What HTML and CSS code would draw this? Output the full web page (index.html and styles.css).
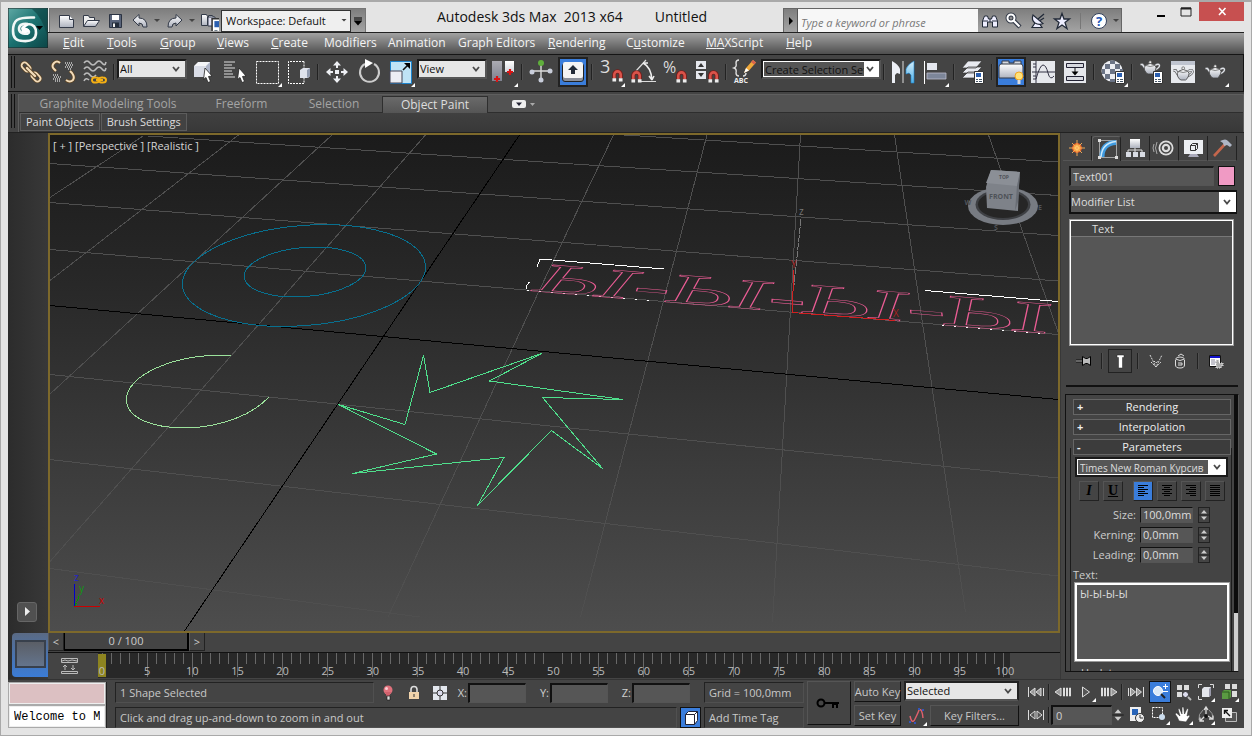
FILE: index.html
```html
<!DOCTYPE html>
<html lang="en">
<head>
<meta charset="utf-8">
<title>Autodesk 3ds Max 2013 x64 - Untitled</title>
<link rel="stylesheet" href="styles.css">
</head>
<body>
<svg class="defs" aria-hidden="true">
  <defs>
    <linearGradient id="metal" x1="0" y1="0" x2="0" y2="1"><stop offset="0" stop-color="#fff"/><stop offset="1" stop-color="#aeb3bf"/></linearGradient>
    <linearGradient id="sky" x1="0" y1="0" x2="0" y2="1"><stop offset="0" stop-color="#d6eefa"/><stop offset="1" stop-color="#4fb0e6"/></linearGradient>
    <linearGradient id="teal" x1="0" y1="0" x2="1" y2="1"><stop offset="0" stop-color="#5fa9a5"/><stop offset=".5" stop-color="#1a706f"/><stop offset="1" stop-color="#0c4546"/></linearGradient>
    <radialGradient id="spark"><stop offset="0" stop-color="#fff"/><stop offset=".4" stop-color="#ffd35a"/><stop offset="1" stop-color="#d9461c"/></radialGradient>
    <symbol id="fly" viewBox="0 0 4 4"><path d="M4 0v4H0z" fill="#fff"/></symbol>
    <symbol id="magnet" viewBox="0 0 12 14"><path d="M2.500 10V6a3.500 3.500 0 0 1 7 0v4" fill="none" stroke="#7a1a16" stroke-width="4.500"/><path d="M2.500 10V6a3.500 3.500 0 0 1 7 0v4" fill="none" stroke="#d9534a" stroke-width="2.800"/><path d="M.5 10h4v3.500h-4zM7.500 10h4v3.500h-4z" fill="#eee"/></symbol>
    <symbol id="teapot" viewBox="0 0 22 15"><path d="M1.500 4.500h2L6.500 9" fill="none" stroke="#555" stroke-width="3"/><path d="M1.500 4.500h2L6.500 9" fill="none" stroke="#dfe2e8" stroke-width="1.600"/><path d="M16 5.500q4-2.500 4.500 0 0 2.500-5 4.500" fill="none" stroke="#555" stroke-width="2.600"/><path d="M16 5.500q4-2.500 4.500 0 0 2.500-5 4.500" fill="none" stroke="#dfe2e8" stroke-width="1.300"/><path d="M7 5q4-3 8.500 0 2.500 2 1 5-1.500 3.500-3 4H9q-2-.5-3.500-4-1-3 1.500-5z" fill="url(#metal)" stroke="#444" stroke-width=".8"/><path d="M7 5.500q4 2 8.500 0" fill="none" stroke="#666" stroke-width=".8"/><circle cx="11.200" cy="2.200" r="1.400" fill="#eee" stroke="#444" stroke-width=".6"/></symbol>
    <symbol id="card" viewBox="0 0 10 13"><path d="M.5.5h9v12h-9z" fill="#fff" stroke="#333"/><path d="M2 2h5v4H2z" fill="#2b5fb0"/><path d="M2 8h2v1H2zM5 8h3v1H5zM2 10h2v1H2zM5 10h3v1H5z" fill="#456"/></symbol>
    <symbol id="chev" viewBox="0 0 8 6"><path d="M1 1l3 3.500L7 1" fill="none" stroke="#4a4a4a" stroke-width="1.800"/></symbol>
    <symbol id="updown" viewBox="0 0 10 14"><path d="M2 5.500L5 2l3 3.500zM2 8.500L5 12l3-3.500z" fill="#ccc"/><path d="M0 7h10" stroke="#222"/></symbol>
    <symbol id="chain" viewBox="0 0 24 24"><g fill="none" stroke-linecap="round" stroke="#5b4426" stroke-width="3.200"><rect x="2" y="4" width="10" height="6" rx="3" transform="rotate(45 7 7)"/><rect x="12" y="14" width="10" height="6" rx="3" transform="rotate(45 17 17)"/></g><g fill="none" stroke-linecap="round" stroke="#f3dcba" stroke-width="1.800"><rect x="2" y="4" width="10" height="6" rx="3" transform="rotate(45 7 7)"/><rect x="12" y="14" width="10" height="6" rx="3" transform="rotate(45 17 17)"/></g><path d="M8 8l8 8" stroke="#5b4426" stroke-width="4" stroke-linecap="round"/><path d="M8 8l8 8" stroke="#f3dcba" stroke-width="2.400" stroke-linecap="round"/></symbol>
  </defs>
</svg>

<div class="app">
  <header class="titlebar">
    <button class="logo" aria-label="Application menu">
      <svg viewBox="0 0 40 40"><path d="M0 0h40v40H0z" fill="url(#teal)" stroke="#222"/><path d="M24 1h15v26q-5-18-15-26z" fill="#0d3f40" opacity=".6"/><path d="M26 9.500Q14 9 9 12q-4 3-4 11 0 10 10 10 13 1 13-8 0-9-8-9-9-1-9 5 0 3 4 4.500 6 1 6-1.500t-5-3" fill="none" stroke="#f2f7f6" stroke-width="2.600" stroke-linecap="round"/><path d="M13 20q3-5 8-3l-4 2.500q5 1 4 4-3 3-7 1" fill="#fff"/><path d="M28 18h7l-3.500 4z" fill="#000"/></svg>
    </button>
    <div class="qat">
      <button aria-label="New"><svg viewBox="0 0 20 20"><path d="M2.500 4.500h10l4 4v8h-14z" fill="url(#metal)" stroke="#333a48"/><path d="M12.500 4.500v4h4" fill="#fff" stroke="#333a48"/></svg></button>
      <button aria-label="Open"><svg viewBox="0 0 20 20"><path d="M2.500 15V4.500h5l1 2h5V9" fill="#eee" stroke="#333a48"/><path d="M2.500 15.500l4-6h12l-4 6z" fill="url(#metal)" stroke="#333a48"/></svg></button>
      <button aria-label="Save"><svg viewBox="0 0 20 20"><path d="M4.500 3.500h12v13h-12z" fill="#59647a" stroke="#2b3342"/><path d="M7 4h7v5H7z" fill="#fff"/><path d="M7 11.500h7V16H7z" fill="#222c3a"/><path d="M8 12.500h2V16H8z" fill="#eee"/></svg></button>
      <button class="wide" aria-label="Undo"><svg viewBox="0 0 20 20"><path d="M3 9l6-5.500V7q8 0 8 9h-4q0-4-4-4v3z" fill="url(#metal)" stroke="#333a48"/></svg></button>
      <span class="tri" aria-hidden="true"></span>
      <button class="wide" aria-label="Redo"><svg viewBox="0 0 20 20"><path d="M17 9l-6-5.500V7q-8 0-8 9h4q0-4 4-4v3z" fill="url(#metal)" stroke="#333a48"/></svg></button>
      <span class="tri" aria-hidden="true"></span>
      <button aria-label="Project folder"><svg viewBox="0 0 20 20"><path d="M2.500 3.500h5l1 2v9h-6zM9.500 6.500v-2h4l1 2" fill="url(#metal)" stroke="#333a48"/><path d="M9 6h7v9H9z" fill="#dde" stroke="#333a48"/><svg x="10" y="7" width="8" height="11"><use href="#card"/></svg></svg></button>
      <div class="pick workspace"><select aria-label="Workspace"><option>Workspace: Default</option></select><i class="tri" aria-hidden="true"></i></div>
      <button class="qat-more" aria-label="Customize toolbar"><svg viewBox="0 0 12 20"><path d="M2 7h8M2 9h8" stroke="#000"/><path d="M2 10h8l-4 4.500z"/></svg></button>
    </div>
    <h1>Autodesk 3ds Max&nbsp; 2013 x64<span>Untitled</span></h1>
    <div class="info">
      <button class="info-open" aria-label="Expand search"><svg viewBox="0 0 12 20"><path d="M4 6v8l4-4z"/></svg></button>
      <input type="search" aria-label="Search" placeholder="Type a keyword or phrase">
      <button aria-label="Find"><svg viewBox="0 0 20 20"><path d="M2.500 16v-6l2-5h3l1 3h3l1-3h3l2 5v6h-5v-5h-5v5z" fill="#eef" stroke="#222a38"/><path d="M3 10h5M12 10h5M10 8v3" stroke="#222a38"/></svg></button>
      <button aria-label="Subscription"><svg viewBox="0 0 20 20"><circle cx="7" cy="7" r="3.500" fill="none" stroke="#333a48" stroke-width="4"/><path d="M9 9l7 7" stroke="#333a48" stroke-width="4.500"/><circle cx="7" cy="7" r="3.500" fill="none" stroke="#fff" stroke-width="2"/><path d="M9 9l6.500 6.500" stroke="#fff" stroke-width="2"/></svg></button>
      <button aria-label="Communication"><svg viewBox="0 0 20 20"><path d="M7 12l-3 4.500h10L11 12" fill="#eef" stroke="#222a38" stroke-width="1.200"/><path d="M5 4q-2 5 2 8 4 2.500 8 .5z" fill="#eef" stroke="#222a38" stroke-width="1.200"/><path d="M10 8l6-5M12 9.500l4-2.500" stroke="#222a38" stroke-width="1.300"/></svg></button>
      <button aria-label="Favorites"><svg viewBox="0 0 20 20"><path d="M10 2.500l2 5.500h5.500L13 11.500l2 6-5-3.500-5 3.500 2-6L2.500 8H8z" fill="#eef" stroke="#222a38" stroke-width="1.300"/></svg></button>
      <span class="info-sep"></span>
      <button aria-label="Help"><svg viewBox="0 0 20 20"><circle cx="10" cy="10" r="7.500" fill="#fff" stroke="#33415c"/><text x="10" y="14.500" class="q">?</text></svg></button>
      <span class="tri" aria-hidden="true"></span>
    </div>
    <div class="winctl">
      <button aria-label="Minimize"><svg viewBox="0 0 20 20"><path d="M6 13h8v2H6z"/></svg></button>
      <button aria-label="Maximize"><svg viewBox="0 0 20 20"><path d="M5 6h10v8H5z" fill="none" stroke="#222"/><path d="M5 6.500h10" stroke="#222" stroke-width="2"/></svg></button>
      <button class="close" aria-label="Close"><svg viewBox="0 0 20 20"><path d="M7 6l6.500 7M13.500 6L7 13" stroke="#fff" stroke-width="1.600"/></svg></button>
    </div>
  </header>

  <div class="frame">
  <nav class="menubar">
    <button><u>E</u>dit</button><button><u>T</u>ools</button><button><u>G</u>roup</button><button><u>V</u>iews</button><button><u>C</u>reate</button><button>Modifiers</button><button>Animation</button><button>Graph Editors</button><button><u>R</u>endering</button><button>C<u>u</u>stomize</button><button><u>M</u><u>A</u>XScript</button><button><u>H</u>elp</button>
  </nav>

  <div class="toolbar">
    <span class="grip"></span>
    <button aria-label="Link"><svg viewBox="0 0 32 32"><use href="#chain" x="4" y="4" width="24" height="24"/></svg></button>
    <button aria-label="Unlink"><svg viewBox="0 0 32 32"><g fill="none" stroke="#5b4426" stroke-width="3.600"><path d="M13 7q-3-3-6 0-3 3 0 6l2 2M19 24q4 3 7 0 2-3-1-7l-2-2"/></g><g fill="none" stroke="#f3dcba" stroke-width="2"><path d="M13 7q-3-3-6 0-3 3 0 6l2 2M19 24q4 3 7 0 2-3-1-7l-2-2"/></g><g stroke="#aaa" stroke-width="2" stroke-dasharray="1 1"><path d="M18 7h7M19 9h7M18 11h8M21 13h4M6 19h6M7 21h7M6 23h8M8 25h6"/></g></svg></button>
    <button aria-label="Bind to space warp"><svg viewBox="0 0 32 32"><path d="M5 7q3-4 6 0t6 0 6 0 4-1M5 13q3-4 6 0t6 0 6 0 4-1M5 19q3-4 6 0t6 0M5 25q2-4 5-1" fill="none" stroke="#bbb" stroke-width="1.600"/><path d="M13 24q0-3 4-2.500 3 0 3 2.500t-3 2.500q-4 .5-4-2.500zM20 24q0-3 4-2.500 3 0 3 2.500t-3 2.500q-4 .5-4-2.500zM17 24h7" fill="none" stroke="#f5b014" stroke-width="2"/></svg></button>
    <span class="sep"></span>
    <div class="pick combo-s"><select aria-label="Selection filter"><option>All</option></select><svg class="chev"><use href="#chev"/></svg></div>
    <button aria-label="Select object"><svg viewBox="0 0 32 32"><path d="M7 10l4-4h12v10l-4 5H7z" fill="#f4f5f8"/><path d="M7 10h12v11H7z" fill="#d9dce6"/><path d="M19 10l4-4v11l-4 4z" fill="#aeb5c8"/><path d="M18 12l7 8-3.500.5 2 5-2.500 1-2-5-2.500 2z" fill="#fff" stroke="#222" stroke-width=".8"/></svg></button>
    <button aria-label="Select by name"><svg viewBox="0 0 32 32"><path d="M5 6h11M5 9h8M5 12h11M5 15h8M5 18h9M5 21h11" stroke="#ddd" stroke-width="1.200"/><path d="M20 12l7 8-3.500.5 2 5-2.500 1-2-5-2.500 2z" fill="#fff" stroke="#222" stroke-width=".8"/></svg></button>
    <button aria-label="Rectangular region"><svg viewBox="0 0 32 32"><path d="M5.500 5.500h22v22h-22z" fill="none" stroke="#fff" stroke-dasharray="2 1"/><use href="#fly" x="27" y="27" width="4" height="4"/></svg></button>
    <button aria-label="Window crossing"><svg viewBox="0 0 32 32"><path d="M21 5.500H5.500v22H21v-7M21 5.500v7" fill="none" stroke="#fff" stroke-dasharray="2 1"/><path d="M17 14l3-2h7v8l-2 2h-8z" fill="#dfe3ec"/><path d="M24 14l3-2v8l-3 2z" fill="#929cb0"/></svg></button>
    <span class="sep"></span>
    <button aria-label="Move"><svg viewBox="0 0 32 32"><path d="M16 5l4 4.500h-3V12h-2V9.500h-3zM16 27l4-4.500h-3V20h-2v2.500h-3zM5 16l4.500-4v3H12v2H9.500v3zM27 16l-4.500-4v3H20v2h2.500v3zM14 14h4v4h-4z" fill="#eef0f4"/></svg></button>
    <button aria-label="Rotate"><svg viewBox="0 0 32 32"><path d="M21 8a9.500 9.500 0 1 1-9 0" fill="none" stroke="#ccc" stroke-width="2"/><path d="M12 3l8 4-8 5z" fill="#fff"/></svg></button>
    <button aria-label="Scale"><svg viewBox="0 0 32 32"><path d="M5.500 5.500h21v22h-21z" fill="#bfe3f6" stroke="#1c83cd"/><path d="M5 15h12v12H5z" fill="#eceef4" stroke="#445"/><path d="M18 14l5-5" stroke="#111" stroke-width="1.600"/><path d="M19 7h6v6z"/><use href="#fly" x="26" y="27" width="4" height="4"/></svg></button>
    <div class="pick combo-s"><select aria-label="Reference coordinate system"><option>View</option></select><svg class="chev"><use href="#chev"/></svg></div>
    <button aria-label="Pivot center"><svg viewBox="0 0 32 32"><path d="M5 5h10v20H5zM18 5h9v11h-9z" fill="url(#metal)"/><path d="M5 5h10v20H5z" fill="#445" opacity=".45"/><path d="M7 23h6M10 20v6M20 16h6M23 13v6" stroke="#d81414" stroke-width="2.200"/><use href="#fly" x="27" y="27" width="4" height="4"/></svg></button>
    <span class="sep"></span>
    <button aria-label="Manipulate"><svg viewBox="0 0 32 32"><path d="M16 8v16M8 15h16" stroke="#ddd" stroke-width="1.400"/><circle cx="16" cy="7" r="3" fill="#5fae3c"/><g fill="#c9cedb"><circle cx="7" cy="16" r="2.500"/><circle cx="25" cy="15" r="2.500"/><circle cx="16" cy="24" r="2.500"/></g></svg></button>
    <button class="on" aria-label="Keyboard shortcut override"><svg viewBox="0 0 32 32"><rect x="5.500" y="7.500" width="21" height="18" rx="2.500" fill="#8a8f9a" stroke="#222"/><rect x="6" y="6" width="20" height="16" rx="2" fill="#f4f4f4"/><path d="M16 9l5 5h-3v4h-4v-4h-3z" fill="#222b38"/></svg></button>
    <span class="sep"></span>
    <button aria-label="Snaps toggle"><svg viewBox="0 0 32 32"><text x="5" y="17" class="ic-num">3</text><use href="#magnet" x="17" y="13" width="11" height="13"/><use href="#fly" x="26" y="27" width="4" height="4"/></svg></button>
    <button aria-label="Angle snap"><svg viewBox="0 0 32 32"><path d="M9 15L19 4M14 25.500h15" stroke="#ddd" stroke-width="1.200"/><path d="M16 7q8 4 9 17M16 7l5 0M25 24l-3-4M25 24l2-4" fill="none" stroke="#eee" stroke-width="1.500"/><use href="#magnet" x="4" y="14" width="11" height="13"/></svg></button>
    <button aria-label="Percent snap"><svg viewBox="0 0 32 32"><text x="4" y="17" class="ic-num pct">%</text><use href="#magnet" x="17" y="14" width="11" height="13"/></svg></button>
    <button aria-label="Spinner snap"><svg viewBox="0 0 32 32"><path d="M5 5h10v8H5zM5 15h10v8H5z" fill="#e6e8ee"/><path d="M7 11l3-4 3 4zM7 17l3 4 3-4z" fill="#333"/><use href="#magnet" x="17" y="14" width="11" height="13"/></svg></button>
    <span class="sep"></span>
    <button aria-label="Named selection sets"><svg viewBox="0 0 32 32"><path d="M10 4q-3 0-3 3 1 4-2 5 3 1 2 5 0 3 3 3M14 20q3 0 3-3" fill="none" stroke="#ddd" stroke-width="1.400"/><path d="M15 17l2-5 7-8 3 2.500-7 8z" fill="#f0a93a"/><path d="M24 4l3 2.500-2 2L22 6z" fill="#d8624e"/><path d="M15 17l2-5 3 2.500z" fill="#fff"/><text x="5" y="27" class="abc">ABC</text></svg></button>
    <div class="pick combo-l"><select aria-label="Create selection set"><option>Create Selection Set</option></select><svg class="chev"><use href="#chev"/></svg></div>
    <span class="sep"></span>
    <button aria-label="Mirror"><svg viewBox="0 0 32 32"><path d="M5 5q6 3 8 8v5l-3-1-2 2v8H5z" fill="#eceff5"/><path d="M27 5q-6 3-8 8v5l3-1 2 2v8h3z" fill="url(#sky)" stroke="#1c83cd" stroke-width=".6"/><path d="M16 5v22" stroke="#ddd"/></svg></button>
    <button aria-label="Align"><svg viewBox="0 0 32 32"><path d="M5.500 5v23" stroke="#fff"/><path d="M8 7h10v7H8z" fill="#e4e7ee"/><path d="M8 17h19v6H8z" fill="#7d8699" stroke="#bbc" stroke-width=".8"/><use href="#fly" x="26" y="27" width="4" height="4"/></svg></button>
    <span class="sep"></span>
    <button aria-label="Layer manager"><svg viewBox="0 0 32 32"><g fill="#e8eaf0" stroke="#333" stroke-width=".7"><path d="M5 22l6-6h14l-6 6zM5 17l6-6h14l-6 6zM5 12l6-7h14l-6 7z"/></g><use href="#card" x="17" y="15" width="10" height="13"/></svg></button>
    <span class="sep"></span>
    <button class="on" aria-label="Graphite modeling tools"><svg viewBox="0 0 32 32"><path d="M7 9V5h7v2h5V5h7v4" fill="#d6d9e0" stroke="#333a48"/><path d="M6 8h20q2 0 2 3v11H4V11q0-3 2-3z" fill="url(#metal)" stroke="#333a48"/><circle cx="24" cy="20" r="4" fill="#ffe27a" stroke="#f2a520"/><path d="M22.500 24h3v4h-3z" fill="#ddd"/></svg></button>
    <button aria-label="Curve editor"><svg viewBox="0 0 32 32"><path d="M4 5h24v22H4z" fill="#e6e8ec"/><path d="M9 5v22M5 16h23M6 8h3M6 11h3M6 20h3M6 23h3" stroke="#334"/><path d="M9 23q4-14 7-14t5 8 6 3" fill="none" stroke="#334"/></svg></button>
    <button aria-label="Schematic view"><svg viewBox="0 0 32 32"><path d="M5 5h22v22H5z" fill="#e6e8ec"/><path d="M7.500 7.500h17v4h-17zM7.500 20.500h17v4h-17z" fill="#d7d9df" stroke="#223"/><path d="M16 12v6" stroke="#111"/><path d="M12.500 15.500h7L16 19.500z"/></svg></button>
    <span class="sep"></span>
    <button aria-label="Material editor"><svg viewBox="0 0 32 32"><circle cx="15" cy="15" r="10.500" fill="#eceef3"/><path d="M8 8h5v5H8zM18 8h5v5h-5zM13 13h5v5h-5zM5 13h3v5H5zM23 13h3v5h-3zM8 18h5v5H8zM13 4.500h5V8h-5zM13 23h5v3h-5z" fill="#6b7486"/><use href="#card" x="18" y="15" width="10" height="13"/><use href="#fly" x="27" y="27" width="4" height="4"/></svg></button>
    <span class="sep"></span>
    <button aria-label="Render setup"><svg viewBox="0 0 32 32"><use href="#teapot" x="4" y="4" width="22" height="15"/><use href="#card" x="18" y="15" width="10" height="13"/></svg></button>
    <button aria-label="Rendered frame"><svg viewBox="0 0 32 32"><path d="M4 5h24v22H4z" fill="#e8eaee"/><path d="M4 5h24v4H4z" fill="#bfc4cf"/><use href="#teapot" x="5" y="10" width="22" height="15"/></svg></button>
    <button aria-label="Render"><svg viewBox="0 0 32 32"><use href="#teapot" x="5" y="8" width="22" height="15"/><use href="#fly" x="26" y="27" width="4" height="4"/></svg></button>
  </div>

  <section class="ribbon">
    <span class="grip tall"></span>
    <div class="ribbon-body">
      <div class="tabs"><button>Graphite Modeling Tools</button><button>Freeform</button><button>Selection</button><button class="active">Object Paint</button>
        <button class="mini" aria-label="Minimize ribbon"><svg viewBox="0 0 26 12"><rect x="2" y="2" width="14" height="8" rx="2" fill="#eee"/><path d="M6 4.500h6L9 8z" fill="#223"/><path d="M20 5h5l-2.500 3z" fill="#aaa"/></svg></button>
      </div>
      <div class="panels"><button>Paint Objects</button><button>Brush Settings</button></div>
    </div>
  </section>

  <main class="main">
    <aside class="dock">
      <button class="dock-play" aria-label="Expand"><svg viewBox="0 0 20 20"><path d="M8 5v9l5-4.500z" fill="#eee"/></svg></button>
      <button class="dock-view" aria-label="Viewport layout"><span></span></button>
    </aside>

    <div class="center">
      <div class="viewport">
        <svg viewBox="50 135 1008 496" preserveAspectRatio="xMinYMin slice">
          <g class="grid">
            <path d="M624 135L1058 162M148 136L558 163 1058 195.500M50 163.500L558 199.500 1058 235.500M50 202.500L558 242 1058 281M50 249.500L526 290 1058 334.500M50 374.500L550 426 1058 478M50 459.500L558 518 1058 576M50 568.500L420 617"/>
            <path d="M143 136L50 197.500M238.500 135L50 280.500M332 135L50 394M425.500 135L50 561.500M613.500 135L539.500 290 388 617M707 135L580.500 617M800.500 135L772.500 622M894.500 135L965.500 612M988.500 135L1058 332"/>
          </g>
          <path class="axis" d="M50 305.500L1058 399.500M519.500 135L184.500 631"/>
          <g class="donut"><ellipse cx="304" cy="275.500" rx="122" ry="50" transform="rotate(-4.800 304 275.500)"/><ellipse cx="305" cy="272" rx="61" ry="24.500" transform="rotate(-4.800 305 272)"/></g>
          <path class="arc" d="M231 355.500C175 353 126 375 126.500 400 127 418 152 428 186 428 222 427 252 415 269 397"/>
          <path class="star" d="M423.500 355.500L430 392.500 541.500 353.500 489.500 381 622.500 399.500 542.500 397.500 602.500 468.500 551.500 430.500 477.500 505.500 504 457.500 352.500 473.500 436.500 454 338.500 404.500 405 424.500z"/>
          <path class="bracket" d="M537 267l3-8 124 10M526.500 289v-3l3-4M925 290.500L1058 301.500"/>
          <path class="bracket dots" d="M527 290L650 300.500M942 325L1048 334"/>
          <g class="letters">
            <text font-size="112" transform="matrix(1 .083 -.12 .37 532 291)">Ы-</text>
            <text font-size="116" transform="matrix(1 .083 -.02 .37 666 302)">Ы-</text>
            <text font-size="120" transform="matrix(1 .083 .05 .37 803 313)">Ы-</text>
            <text font-size="124" transform="matrix(1 .083 .1 .37 945 325)">Ы</text>
          </g>
          <g class="gizmo"><path d="M801 219l-7 66" stroke="#777" stroke-dasharray="7 1"/><path d="M792 312l2-42M792 312.500l103 8" stroke="#d42020"/><text x="799" y="215" fill="#777">z</text><text x="791" y="268" fill="#a82020">Y</text><text x="893" y="317" fill="#a82020">X</text></g>
          <g class="tripod"><path d="M74.500 606v-22" stroke="#00c"/><path d="M75 606l5-12" stroke="#090" stroke-dasharray="3 1"/><path d="M74 606.500h26" stroke="#c00"/><text x="74" y="581" fill="#22c">z</text><text x="79" y="592" fill="#191">y</text><text x="99" y="604" fill="#c00">x</text></g>
          <g class="cube">
            <ellipse cx="1003" cy="206" rx="35" ry="19" fill="#777b82"/><ellipse cx="1003" cy="204.500" rx="27.500" ry="15.500" fill="#3e4044"/><ellipse cx="1003" cy="204.500" rx="25" ry="13.500" fill="#262626"/>
            <path d="M991 170l29 2-1 13-1 26-31-3-1-21z" fill="#7e8289"/><path d="M986 183l31 3 3-14-29-2z" fill="#8b8f96"/><path d="M1017 186l3-14-2 30-3 9z" fill="#696d74"/>
            <text x="1001" y="199" class="cube-t">FRONT</text><text x="1004" y="179" class="cube-s">TOP</text><text x="996" y="230" class="cube-c">S</text><text x="1040" y="210" class="cube-c">E</text><text x="968" y="205" class="cube-c">W</text>
          </g>
        </svg>
        <p class="vlabel">[ + ] [Perspective ] [Realistic ]</p>
      </div>
      <div class="slider"><button>&lt;</button><button class="thumb">0 / 100</button><button>&gt;</button></div>
      <div class="track">
        <button class="track-open" aria-label="Open mini curve editor"><svg viewBox="0 0 20 20"><path d="M2.500 2.500h16v4h-16zM2.500 15.500h16v2h-16z" fill="none" stroke="#bbb"/><path d="M3 5l3-1 3 1 4-1 5 1M6 14V9M4 11l2-2 2 2M14 9v5M12 12l2 2 2-2" fill="none" stroke="#bbb"/></svg></button>
        <div class="ruler">
          <svg class="ticks" viewBox="0 0 905 24" preserveAspectRatio="none"><path d="M0 5.500h905" stroke-width="11" stroke-dasharray="1 8.040"/><path d="M0 12h905" stroke-width="24" stroke-dasharray="1 44.200"/></svg>
          <span class="now"></span>
          <div class="nums"><span>0</span><span>5</span><span>10</span><span>15</span><span>20</span><span>25</span><span>30</span><span>35</span><span>40</span><span>45</span><span>50</span><span>55</span><span>60</span><span>65</span><span>70</span><span>75</span><span>80</span><span>85</span><span>90</span><span>95</span><span>100</span></div>
        </div>
      </div>
    </div>

    <aside class="command">
      <div class="ctabs">
        <button aria-label="Create"><svg viewBox="0 0 24 20"><circle cx="12" cy="10" r="5" fill="url(#spark)"/><path d="M12 2v16M4 10h16M7 5l10 10M17 5L7 15" stroke="#ffb05a" stroke-width=".9"/></svg></button>
        <button class="active" aria-label="Modify"><svg viewBox="0 0 24 20"><path d="M4.500 1.500h17v17h-17z" fill="none" stroke="#bbb" stroke-width=".8"/><path d="M7 18Q7 4 21 3.500" fill="none" stroke="#3f9be0" stroke-width="5"/><path d="M6 18Q7 4 21 2.500" fill="none" stroke="#cbe8fa" stroke-width="1.500"/><path d="M3 0h3v3H3zM20 17h3v3h-3zM3 17h3v3H3z" fill="#ddd"/></svg></button>
        <button aria-label="Hierarchy"><svg viewBox="0 0 24 20"><path d="M7 1h10v9H7z" fill="url(#metal)"/><path d="M12 10v5M5 15v-3h14v3" stroke="#ddd" fill="none"/><path d="M3 14h5v5H3zM10 14h5v5h-5zM17 14h5v5h-5z" fill="#d8dbe3"/></svg></button>
        <button aria-label="Motion"><svg viewBox="0 0 24 20"><circle cx="14" cy="10" r="7.500" fill="#ddd"/><circle cx="14" cy="10" r="5" fill="none" stroke="#444" stroke-width="1.500"/><circle cx="14" cy="10" r="2" fill="#444"/><path d="M5 4q-3 6 0 12M2 6q-2 4 0 8" stroke="#aaa" fill="none"/></svg></button>
        <button aria-label="Display"><svg viewBox="0 0 24 20"><path d="M3 2h19v14H3z" fill="#eceef2"/><path d="M9.500 7.500l2-2h5v5l-2 2h-5zM9.500 7.500h5v5M14.500 7.500l2-2" fill="none" stroke="#333"/><path d="M9 16h7l2 3H7z" fill="#aab"/></svg></button>
        <button aria-label="Utilities"><svg viewBox="0 0 24 20"><path d="M4 18L16 5" stroke="#c4664c" stroke-width="2.600"/><path d="M10 3q6-3 8 0l4 4-2 2-3-2-3 1-1-3z" fill="#aeb6c6"/></svg></button>
      </div>
      <div class="namerow"><input aria-label="Object name" value="Text001"><button class="swatch" aria-label="Object color"></button></div>
      <div class="pick modlist"><select aria-label="Modifier list"><option>Modifier List</option></select><svg class="chev"><use href="#chev"/></svg></div>
      <div class="stack"><div class="stack-item">Text</div></div>
      <div class="stack-tools">
        <button aria-label="Pin stack"><svg viewBox="0 0 20 20"><path d="M2 10h6" stroke="#111" stroke-width="3"/><path d="M2 10h6" stroke="#bbb"/><path d="M8.500 5.500v9l3-2h2l3 2v-9l-3 2h-2z" fill="#bbb" stroke="#000"/></svg></button>
        <span class="sep"></span>
        <button class="pressed" aria-label="Show end result"><svg viewBox="0 0 20 20"><path d="M7 4h7v2.500h-1.500V17h-4V6.500H7z" fill="#fff" stroke="#222" stroke-width=".5"/></svg></button>
        <span class="sep"></span>
        <button aria-label="Make unique"><svg viewBox="0 0 20 20"><path d="M4 4l6 12 6-12M5 11l5 5 5-5M8 10l2 2 2-2" fill="none" stroke="#ddd" stroke-dasharray="2 1"/></svg></button>
        <button aria-label="Remove modifier"><svg viewBox="0 0 20 20"><path d="M5.500 9v5q0 3 4.500 3t4.500-3V9M5.500 8q4.500 3 9 0-1-2-4.500-2t-4.500 2M8 5l3-2 3 2M8 12h4v2H8" fill="none" stroke="#ddd"/></svg></button>
        <span class="sep"></span>
        <button aria-label="Configure modifier sets"><svg viewBox="0 0 20 20"><path d="M3.500 4.500h11v11h-11z" fill="#fff" stroke="#111"/><path d="M4 5h10v2H4z" fill="#11c"/><path d="M5 9h4M5 11h5M5 13h4" stroke="#889"/><path d="M10 9h3v3h4v3h-2v2h-5z" fill="#aaa" stroke="#eee" stroke-dasharray="1 1"/></svg></button>
      </div>
      <div class="rollouts">
        <div class="rolls">
          <button class="roll"><b>+</b>Rendering</button>
          <button class="roll"><b>+</b>Interpolation</button>
          <button class="roll"><b>-</b>Parameters</button>
          <div class="params">
            <div class="pick fontpick"><select aria-label="Font"><option>Times New Roman Курсив</option></select><svg class="chev"><use href="#chev"/></svg></div>
            <div class="fmt">
              <button class="ital" aria-label="Italic"><i>I</i></button><button aria-label="Underline"><u>U</u></button>
              <button class="on first" aria-label="Align left"><svg viewBox="0 0 18 18"><path d="M4 3.500h10M4 5.500h6M4 7.500h10M4 9.500h7M4 11.500h10M4 13.500h6" stroke="#000"/></svg></button>
              <button aria-label="Align center"><svg viewBox="0 0 18 18"><path d="M4 3.500h10M6 5.500h6M4 7.500h10M6 9.500h6M4 11.500h10M6 13.500h6" stroke="#000"/></svg></button>
              <button aria-label="Align right"><svg viewBox="0 0 18 18"><path d="M4 3.500h10M8 5.500h6M4 7.500h10M7 9.500h7M4 11.500h10M8 13.500h6" stroke="#000"/></svg></button>
              <button aria-label="Justify"><svg viewBox="0 0 18 18"><path d="M4 3.500h10M4 5.500h10M4 7.500h10M4 9.500h10M4 11.500h10M4 13.500h10" stroke="#000"/></svg></button>
            </div>
            <div class="field"><label for="size">Size:</label><input id="size" value="100,0mm"><svg><use href="#updown"/></svg></div>
            <div class="field"><label for="kern">Kerning:</label><input id="kern" value="0,0mm"><svg><use href="#updown"/></svg></div>
            <div class="field"><label for="lead">Leading:</label><input id="lead" value="0,0mm"><svg><use href="#updown"/></svg></div>
            <label class="tlabel" for="txt">Text:</label>
            <textarea id="txt">Ы-Ы-Ы-Ы</textarea>
            <span class="update">Update:</span>
          </div>
        </div>
        <div class="scroll"></div>
      </div>
    </aside>
  </main>

  <footer class="status">
    <div class="script"><input class="pink" aria-label="Macro recorder"><input class="listener" aria-label="MAXScript listener" value="Welcome to MAXScript"></div>
    <div class="info-col">
      <div class="row">
        <output class="box selinfo">1 Shape Selected</output>
        <button aria-label="Isolate"><svg viewBox="0 0 20 20"><circle cx="10" cy="7" r="4.500" fill="#e0717c"/><path d="M7 9h6l-2 5H9z" fill="#d0606c"/><circle cx="8.500" cy="5.500" r="1.500" fill="#fbd0d4"/><path d="M9 13h3v4H9z" fill="#ddd" stroke="#111" stroke-width=".6"/></svg></button>
        <button class="lock" aria-label="Selection lock"><svg viewBox="0 0 20 20"><path d="M7 9V6.500a3 3 0 0 1 6 0V9" fill="none" stroke="#ddd" stroke-width="1.600"/><path d="M5 9h10v7H5z" fill="#f1d3ab"/><path d="M10 11v3" stroke="#333"/></svg></button>
        <button aria-label="Absolute mode"><svg viewBox="0 0 20 20"><path d="M3 3h14v14H3z" fill="#e4e8ef"/><path d="M10 3v14M3 10h14" stroke="#333"/><circle cx="10" cy="10" r="3" fill="#dde" stroke="#333"/></svg></button>
        <label class="xyz">X:<input></label><label class="xyz">Y:<input></label><label class="xyz">Z:<input></label>
      </div>
      <div class="row"><output class="box prompt">Click and drag up-and-down to zoom in and out</output>
        <button class="blue" aria-label="Adaptive degradation"><svg viewBox="0 0 20 20"><path d="M4.500 6.500l3-3h9v9l-3 4h-9z" fill="#fff" stroke="#223"/><path d="M4.500 6.500h9v10M13.500 6.500l3-3" fill="none" stroke="#223"/></svg></button></div>
    </div>
    <div class="two gridcol"><output class="box">Grid = 100,0mm</output><button class="box">Add Time Tag</button></div>
    <button class="bigkey" aria-label="Set keys"><svg viewBox="0 0 28 20"><circle cx="6" cy="10" r="3.500" fill="none" stroke="#000" stroke-width="2"/><path d="M9 9h15v2h-1v4h-2v-3h-2v3h-2v-4H9z"/></svg></button>
    <div class="keys">
      <button class="box k">Auto Key</button><div class="pick keysel"><select aria-label="Key selection"><option>Selected</option></select><svg class="chev"><use href="#chev"/></svg></div>
      <button class="box k">Set Key</button><div class="row tight"><button class="tan" aria-label="Tangents"><svg viewBox="0 0 20 20"><path d="M3 10q2 9 5 3t4-9q3-2 4 8" fill="none" stroke="#e0606c" stroke-width="1.400"/><path d="M2 15h2v2H2zM11 2h2v2h-2zM7 16h2v2H7zM15 3h2v2h-2z" fill="#35b"/><use href="#fly" x="16" y="16" width="4" height="4"/></svg></button><button class="box filters">Key Filters...</button></div>
    </div>
    <div class="play">
      <div class="row tight">
        <button aria-label="Go to start"><svg viewBox="0 0 20 20"><path d="M2.500 5v10M9 6v8l-5-4zM15 6v8l-5-4zM17.500 6v8" fill="#999" stroke="#ddd"/></svg></button><span class="sep"></span>
        <button aria-label="Previous frame"><svg viewBox="0 0 20 20"><path d="M8 6v8l-6-4zM10.500 6h1v8h-1zM13.500 6h1v8h-1zM16.500 6h1v8h-1z" fill="#999" stroke="#ddd"/></svg></button>
        <button aria-label="Play"><svg viewBox="0 0 20 20"><path d="M6.500 5v10l7-5z" fill="#555" stroke="#ddd"/><use href="#fly" x="16" y="16" width="4" height="4"/></svg></button>
        <button aria-label="Next frame"><svg viewBox="0 0 20 20"><path d="M12 6v8l6-4zM2.500 6h1v8h-1zM5.500 6h1v8h-1zM8.500 6h1v8h-1z" fill="#999" stroke="#ddd"/></svg></button><span class="sep"></span>
        <button aria-label="Go to end"><svg viewBox="0 0 20 20"><path d="M2.500 6v8M4.500 6v8l5-4zM10.500 6v8l5-4zM17.500 5v10" fill="#999" stroke="#ddd"/></svg></button>
      </div>
      <div class="row tight">
        <button aria-label="Key mode"><svg viewBox="0 0 20 20"><path d="M2.500 5v10M9 6v8l-5-4zM11 6v8l5-4zM17.500 5v10" fill="#555" stroke="#ddd"/></svg></button><span class="sep"></span>
        <input class="frameno" aria-label="Current frame" value="0"><svg class="spin"><use href="#updown"/></svg><button aria-label="Time configuration"><svg viewBox="0 0 20 20"><path d="M4 2h11v14H4z" fill="#eee"/><path d="M6 4h6v6H6z" fill="#2864b8"/><circle cx="14" cy="13" r="4.500" fill="#eee" stroke="#333"/><path d="M14 10v3h3" fill="none" stroke="#333"/></svg></button>
      </div>
    </div>
    <div class="nav">
      <button class="on" aria-label="Zoom"><svg viewBox="0 0 20 20"><circle cx="8" cy="9" r="4.500" fill="#dbe9f8" stroke="#fff"/><path d="M11 12l4 4" stroke="#222" stroke-width="2"/><path d="M13 4.500h5M15.500 2v5M13 9.500h5" stroke="#fff"/></svg></button>
      <button aria-label="Zoom all"><svg viewBox="0 0 20 20"><path d="M4 3h5v5H4zM11 3h5v5h-5zM4 10h5v5H4z" fill="#ddd"/><circle cx="12.500" cy="12.500" r="3" fill="#dde" stroke="#333"/><path d="M15 15l3 3" stroke="#bbb" stroke-width="2"/></svg></button>
      <button aria-label="Zoom extents"><svg viewBox="0 0 20 20"><path d="M2.500 6V2.500H6M14 2.500h3.500V6M2.500 14v3.500H6" fill="none" stroke="#ddd"/><path d="M6 7l2-2h7v8l-2 2H6z" fill="#e4e6ec"/><path d="M13 7l2-2v8l-2 2z" fill="#99a"/><use href="#fly" x="15" y="16" width="4" height="4"/></svg></button>
      <button aria-label="Zoom extents all"><svg viewBox="0 0 20 20"><path d="M6 2h5v5H6zM13 2h5v5h-5zM13 9h5v6h-5z" fill="#ddd"/><path d="M3 10l2-2h7v7l-2 2H3z" fill="#5a9a42"/><path d="M3 10h7v7" stroke="#2a5a1c" fill="none"/><use href="#fly" x="16" y="16" width="4" height="4"/></svg></button>
      <button aria-label="Region zoom"><svg viewBox="0 0 20 20"><path d="M2.500 2.500h10v10h-10z" fill="none" stroke="#fff" stroke-dasharray="2 1"/><circle cx="12" cy="12" r="3" fill="#cde"/><use href="#fly" x="16" y="16" width="4" height="4"/></svg></button>
      <button aria-label="Pan"><svg viewBox="0 0 20 20"><path d="M6 16Q4 11 2 9l1.500-1L7 11 5 4l1.500-.5L9 9 9 2h1.700L11.500 9 14 3.500l1.500.5L14 11l2-1 1 1-4 6z" fill="#fff" stroke="#333" stroke-width=".6"/><use href="#fly" x="16" y="16" width="4" height="4"/></svg></button>
      <button aria-label="Orbit"><svg viewBox="0 0 20 20"><path d="M3 15q-1-6 4-10M13 5q4 3 4 8" fill="none" stroke="#999"/><path d="M10 10V3M10 10l-6 6M10 10l7 4M8 5l2-3 2 3M4 12.500v3.500h4M17 10.500v3.500h-4" fill="none" stroke="#ddd" stroke-width="1.300"/><circle cx="10" cy="11" r="2" fill="#111"/><use href="#fly" x="15" y="16" width="4" height="4"/></svg></button>
      <button aria-label="Maximize viewport"><svg viewBox="0 0 20 20"><path d="M6.500 7.500h11v9h-11z" fill="#555" stroke="#bbb"/><path d="M3 3h10v10H3z" fill="#eee"/><path d="M5.500 9V5.500H9M6 6l5 5" fill="none" stroke="#111" stroke-width="1.400"/></svg></button>
    </div>
  </footer>
  </div>
</div>
</body>
</html>
```
FILE: styles.css
```css
* { box-sizing: border-box; }
body { margin: 0; background: #e4e4e4; font-family: "Open Sans", "Noto Sans", sans-serif; font-size: 11px; line-height: 16px; color: #ddd; }
button, input, select, textarea, output { font: inherit; color: inherit; margin: 0; padding: 0; border: 0; background: none; border-radius: 0; min-width: 0; }
button { display: flex; align-items: center; justify-content: center; white-space: nowrap; }
select { appearance: none; width: 100%; height: 100%; }
svg { display: block; }
.defs { position: absolute; width: 0; height: 0; }
.app { display: flex; flex-direction: column; min-height: 100vh; padding: 0 7px 7px; border: 1px solid #a9a9a9; border-top-width: 2px; }
.frame { display: flex; flex-direction: column; flex: 1; background: #444; border-top: 1px solid #222; }

.titlebar { display: flex; align-items: flex-start; height: 30px; }
.logo { position: relative; z-index: 2; width: 40px; height: 40px; margin-top: 6px; flex: none; }
.logo svg { width: 40px; height: 40px; }
.qat { display: flex; align-items: center; height: 24px; margin: 6px 0 0 1px; padding-left: 5px; background: linear-gradient(#7e7e7e, #a4a4a4); border: 1px solid #777; border-bottom: 0; flex: none; }
.qat button { width: 24px; height: 22px; }
.qat button.wide { width: 25px; }
.qat svg, .info svg, .winctl svg { width: 20px; height: 20px; flex: none; }
.tri { width: 10px; height: 3px; flex: none; background: #444; clip-path: polygon(20% 0, 80% 0, 50% 100%); }
.pick { position: relative; flex: none; }
.pick .chev { position: absolute; right: 5px; top: calc(50% - 3px); width: 8px; height: 6px; pointer-events: none; }
.workspace { width: 130px; height: 22px; background: #efefef; border: 1px solid #333; color: #111; }
.workspace select { padding-left: 4px; }
.workspace .tri { position: absolute; right: 1px; top: 8px; }
.qat .qat-more { width: 14px; }
.qat .qat-more svg { width: 12px; }
.titlebar h1 { flex: 1; min-width: 0; margin: 5px 0 0 71px; font-weight: 400; font-size: 14px; line-height: 20px; color: #111; white-space: nowrap; }
.titlebar h1 span { margin-left: 32px; }
.info { display: flex; align-items: center; height: 24px; margin-top: 6px; background: linear-gradient(#7e7e7e, #a4a4a4); border: 1px solid #666; border-bottom: 0; flex: none; width: 339px; }
.info button { width: 24px; }
.info .info-open { width: 13px; }
.info .info-open svg { width: 12px; }
.info input { flex: 1; height: 23px; padding: 3px 3px 0; background: #f7f7f7; font-style: italic; border-left: 1px solid #555; }
.info input::placeholder { color: #777; opacity: 1; }
.info-sep { width: 1px; height: 16px; margin: 0 6px; background: #777; }
.q { font: bold 13px "Open Sans", sans-serif; fill: #2458b8; text-anchor: middle; }
.winctl { display: flex; width: 95px; margin-left: 27px; flex: none; }
.winctl button { width: 27px; height: 19px; }
.winctl .close { width: 45px; background: #c75050; }
.winctl button:first-child { width: 24px; }

.menubar { display: grid; grid-template-columns: 44px 53px 57px 54px 53px 64px 70px 90px 78px 80px 80px 50px; height: 21px; padding: 0 0 1px 55px; background: linear-gradient(#a2a2a2, #4e4e4e); color: #f4f4f4; font-size: 12px; }
.menubar button { justify-content: flex-start; }

.toolbar { display: flex; align-items: center; height: 38px; padding-bottom: 2px; border: 1px solid #151515; border-left: 0; background: #444; }
.grip { width: 4px; height: 32px; margin: 0 0 0 3px; border-left: 1px solid #111; border-right: 1px solid #111; flex: none; }
.toolbar button { width: 32px; height: 32px; flex: none; }
.toolbar button svg { width: 32px; height: 32px; overflow: visible; }
.toolbar button.on { width: 30px; height: 30px; margin: 0 1px; background: #3a7ddb; border: 2px solid #222; }
.toolbar button.on svg { flex: none; }
.sep { width: 2px; height: 16px; margin: 0 2px; background: #222; border-right: 1px solid #505050; flex: none; }
.combo-s, .combo-l { height: 20px; margin-bottom: 6px; border: 2px solid #1a1a1a; border-right-color: #555; border-bottom-color: #555; background: #e6e6e6; color: #111; }
.combo-s { width: 70px; }
.combo-s select { padding-left: 1px; }
.combo-l { width: 120px; background: #fff; padding: 1px; }
.combo-l select { width: 100px; background: #555; padding-left: 1px; }
.ic-num { font: 18px "Open Sans", sans-serif; fill: #ddd; }
.pct { font-size: 16px; }
.abc { font: bold 7px "Open Sans", sans-serif; fill: #eee; }

.ribbon { display: flex; height: 41px; border-bottom: 1px solid #222; padding-top: 2px; }
.grip.tall { height: 34px; }
.ribbon-body { flex: 1; margin-left: 3px; border: 1px solid #5e5e5e; border-bottom: 0; background: linear-gradient(#484848, #383838); }
.tabs { display: grid; grid-template-columns: 178px 89px 96px 106px 48px; height: 18px; background: #525252; border-bottom: 1px solid #2e2e2e; color: #a4a4a4; font-size: 12px; }
.tabs .active { background: linear-gradient(#6a6a6a, #555); border: 1px solid #2e2e2e; border-bottom: 0; margin-top: 1px; color: #ddd; }
.tabs .mini { justify-content: flex-end; }
.tabs .mini svg { width: 26px; height: 12px; }
.panels { display: flex; }
.panels button { height: 18px; padding: 0 5px; border: 1px solid #5c5c5c; background: #424242; margin-left: 1px; }

.main { display: grid; grid-template-columns: 40px minmax(0, 1fr) 184px; flex: 1; min-height: 546px; }
.dock { display: flex; flex-direction: column; justify-content: flex-end; background: linear-gradient(90deg, #2c2c2c, #383838); }
.dock-play { width: 20px; height: 20px; margin: 0 0 11px 9px; background: #505050; border: 1px solid #666; border-radius: 3px; }
.dock-play svg { width: 20px; height: 20px; flex: none; }
.dock-view { height: 44px; margin: 0 0 2px 4px; padding: 6px 2px 8px; background: linear-gradient(#5a6a84, #3b7cd6); border-radius: 4px 0 0 4px; }
.dock-view span { display: block; width: 31px; height: 28px; border: 2px solid #38404c; background: linear-gradient(#5a5e66, #64748c); }
.center { display: flex; flex-direction: column; min-width: 0; }
.viewport { position: relative; flex: 1; min-height: 0; border: 2px solid #7d692b; background: linear-gradient(#1b1b1b, #282828 30%, #4d4d4d); overflow: hidden; }
.viewport > svg { position: absolute; inset: 0; width: 100%; height: 100%; fill: none; shape-rendering: crispEdges; }
.vlabel { position: absolute; left: 3px; top: 3px; margin: 0; color: #d4d4d4; }
.grid { stroke: #4f4f4f; }
.axis { stroke: #000; }
.donut { stroke: #08708f; }
.arc { stroke: #9be29b; }
.star { stroke: #4fe08c; }
.bracket { stroke: #fff; }
.dots { stroke-dasharray: 2 10; }
.letters text { font-family: "Liberation Serif", serif; font-style: italic; stroke: #ea5c94; vector-effect: non-scaling-stroke; fill: none; }
.gizmo text, .tripod text { font: 10px "Open Sans", sans-serif; }
.cube { shape-rendering: auto; }
.cube-t { font: bold 7px "Open Sans", sans-serif; fill: #4e5258; text-anchor: middle; }
.cube-s { font: bold 5px "Open Sans", sans-serif; fill: #4e5258; text-anchor: middle; }
.cube-c { font: bold 7px "Open Sans", sans-serif; fill: #50545a; text-anchor: middle; }
.slider { display: flex; height: 18px; color: #ccc; }
.slider button { width: 16px; border: 1px solid #222; border-left-color: #5a5a5a; border-top: 0; }
.slider .thumb { width: 125px; border-width: 0 2px 2px 1px; border-color: #000; }
.track { display: flex; height: 27px; margin-top: 1px; border-top: 1px solid #111; }
.track-open { width: 42px; margin-right: 8px; flex: none; }
.track-open svg { width: 20px; height: 20px; }
.ruler { position: relative; flex: 1; margin-right: 50px; background: #282828; height: 25px; }
.ticks { position: absolute; left: 4px; top: 0; width: calc(100% - 10px); height: 24px; stroke: #686868; shape-rendering: crispEdges; }
.nums { position: absolute; left: -8px; right: -7px; top: 10px; display: flex; justify-content: space-between; color: #bbb; }
.nums span { width: 24px; text-align: center; }
.now { position: absolute; left: 0; top: 1px; width: 8px; height: 23px; background: #8d8420; }

.command { padding: 3px 6px 0 4px; border-left: 1px solid #383838; min-width: 0; }
.ctabs { display: grid; grid-template-columns: repeat(6, 29px); margin-left: -2px; }
.ctabs button { height: 25px; border-right: 1px solid #222; border-bottom: 1px solid #555; }
.ctabs .active { border: 1px solid #606060; border-bottom: 0; border-right-color: #222; border-radius: 3px 3px 0 0; }
.ctabs svg { width: 24px; height: 20px; }
.namerow { display: flex; gap: 4px; margin: 5px 3px 0 4px; }
.namerow input { flex: 1; height: 20px; padding-left: 2px; background: #565656; border: 2px solid #1a1a1a; border-width: 2px 1px 1px 2px; border-right-color: #555; border-bottom-color: #555; }
.swatch { width: 17px; height: 20px; background: #f09ac4; border: 1px solid #111; }
.modlist { height: 24px; margin: 4px 1px 5px 4px; border: 2px solid #111; border-right-width: 1px; background: linear-gradient(90deg, #565656 calc(100% - 17px), #fff 0); }
.modlist select { padding-left: 0; }
.stack { height: 127px; margin: 0 4px; border: 2px solid #fff; outline: 1px solid #999; outline-offset: -1px; background: #565656; }
.stack-item { height: 16px; padding-left: 21px; background: #444; border-bottom: 1px solid #777; line-height: 15px; }
.stack-tools { display: flex; align-items: center; height: 25px; margin: 2px 0 0 7px; }
.stack-tools button { width: 24px; height: 24px; }
.stack-tools svg { width: 20px; height: 20px; flex: none; }
.stack-tools .sep { margin: 0 5px; }
.stack-tools .pressed { border: 1px solid #222; }
.rollouts { display: flex; height: 278px; margin: 21px -1px 0 0; border: 1px solid #111; border-right-color: #555; position: relative; }
.rollouts::before { content: ""; position: absolute; left: 0; right: 0; top: -10px; height: 2px; background: #111; }
.rolls { flex: 1; min-width: 0; padding: 4px 2px 0 4px; overflow: hidden; }
.roll { position: relative; width: 158px; height: 16px; margin: 0 0 4px 3px; border: 1px solid #666; background: #3c3c3c; color: #eee; }
.roll b { position: absolute; left: 3px; }
.roll:nth-child(3) { margin-bottom: 0; }
.params { margin: -7px 0 0; padding: 9px 3px 0 4px; border: 1px solid #1c1c1c; border-width: 0 1px; }
.fontpick { height: 20px; border: 2px solid #1a1a1a; background: #fff; padding: 1px; font-size: 10px; }
.fontpick select { width: calc(100% - 17px); background: #565656; padding-left: 2px; }
.fmt { display: flex; gap: 4px; margin: 4px 0 6px 4px; }
.fmt button { width: 20px; height: 20px; border: 1px solid #222; border-left-color: #555; border-top-color: #555; color: #000; font: bold 14px "Liberation Serif", serif; }
.fmt svg { width: 18px; height: 18px; }
.fmt .first { margin-left: 6px; }
.fmt .on { background: #3a7ddb; }
.field { display: flex; align-items: center; height: 16px; margin-bottom: 4px; }
.field label { width: 61px; text-align: right; color: #ccc; }
.field input { width: 53px; height: 16px; margin: 0 5px 0 4px; padding-left: 2px; background: #565656; border: 1px solid #111; border-right-color: #555; border-bottom-color: #555; }
.field svg { width: 12px; height: 16px; border: 1px solid #222; }
.tlabel { display: block; color: #ccc; margin-left: -2px; }
.params textarea { display: block; width: 154px; height: 78px; padding: 1px 3px; resize: none; background: #565656; border: 2px solid #fff; outline: 1px solid #999; }
.update { display: block; margin: 4px 0 0 6px; color: #ccc; }
.scroll { width: 4px; background: linear-gradient(#0c0c0c 218px, #d0d0d0 0); }

.status { display: flex; align-items: flex-start; height: 49px; border-top: 1px solid #333; color: #d0d0d0; }
.script { width: 99px; margin: 2px 8px 0 0; flex: none; border-right: 1px solid #222; }
.script input { display: block; width: 98px; height: 23px; border: 2px solid #eee; outline: 1px solid #aaa; outline-offset: -1px; }
.script .pink { background: #dcc0c2; }
.script .listener { background: #fff; color: #000; padding: 0 4px; font: 12px "Liberation Mono", monospace; }
.row { display: flex; align-items: center; }
.box { display: flex; align-items: center; height: 21px; padding: 0 4px; border: 1px solid #222; border-right-color: #505050; border-bottom-color: #505050; color: #c8c8c8; white-space: nowrap; }
.info-col { flex: 1; min-width: 0; margin-top: 2px; }
.info-col .row + .row { margin-top: 4px; }
.selinfo { flex: 1; margin-right: 2px; }
.row button { width: 24px; height: 21px; flex: none; }
.row svg { width: 20px; height: 20px; flex: none; }
.info-col .lock { margin: 0 2px; }
.prompt { flex: 1; }
.row .blue { width: 21px; background: #3a7ddb; border: 1px solid #111; margin-left: 3px; }
.xyz { display: flex; align-items: center; width: 82px; height: 21px; padding-right: 8px; justify-content: flex-end; gap: 1px; }
.xyz input { width: 58px; height: 20px; background: #565656; border: 2px solid #111; border-right: 1px solid #555; border-bottom: 1px solid #555; }
.xyz:last-child { padding-right: 0; width: 74px; margin-right: 11px; }
.two { display: flex; flex-direction: column; gap: 4px; margin: 2px 3px 0 3px; }
.gridcol { width: 100px; flex: none; }
.gridcol .box { justify-content: flex-start; }
.bigkey { width: 44px; height: 44px; margin-top: 1px; flex: none; border: 1px solid #555; border-right-color: #111; border-bottom-color: #111; }
.bigkey svg { width: 28px; height: 20px; }
.keys { display: grid; grid-template-columns: 47px 115px; gap: 3px 3px; margin: 1px 0 0 3px; flex: none; }
.keys .k { padding: 0; border-color: #555 #111 #111 #555; }
.keysel { height: 20px; background: #e6e6e6; border: 2px solid #222; border-bottom-color: #555; color: #111; }
.keysel select { padding-left: 1px; }
.keys .tan { width: 26px; }
.keys .filters { flex: 1; border-color: #555 #111 #111 #555; }
.play { width: 123px; margin: 1px 2px 0 5px; flex: none; }
.play .row + .row { margin-top: 2px; }
.play .row button { width: 23px; }
.play .row button svg { width: 20px; }
.play .sep { margin: 0 1px; }
.play .frameno { width: 64px; height: 20px; padding-left: 3px; background: #565656; border: 2px solid #111; border-right: 1px solid #555; border-bottom: 1px solid #555; }
.play .spin { width: 12px; height: 16px; }
.nav { display: grid; grid-template-columns: repeat(4, 23px); row-gap: 1px; margin: 1px 3px 0 0; flex: none; }
.nav button { height: 22px; width: 22px; }
.nav svg { width: 20px; height: 20px; flex: none; }
.nav .on { background: #3a7ddb; border: 1px solid #111; }
```
